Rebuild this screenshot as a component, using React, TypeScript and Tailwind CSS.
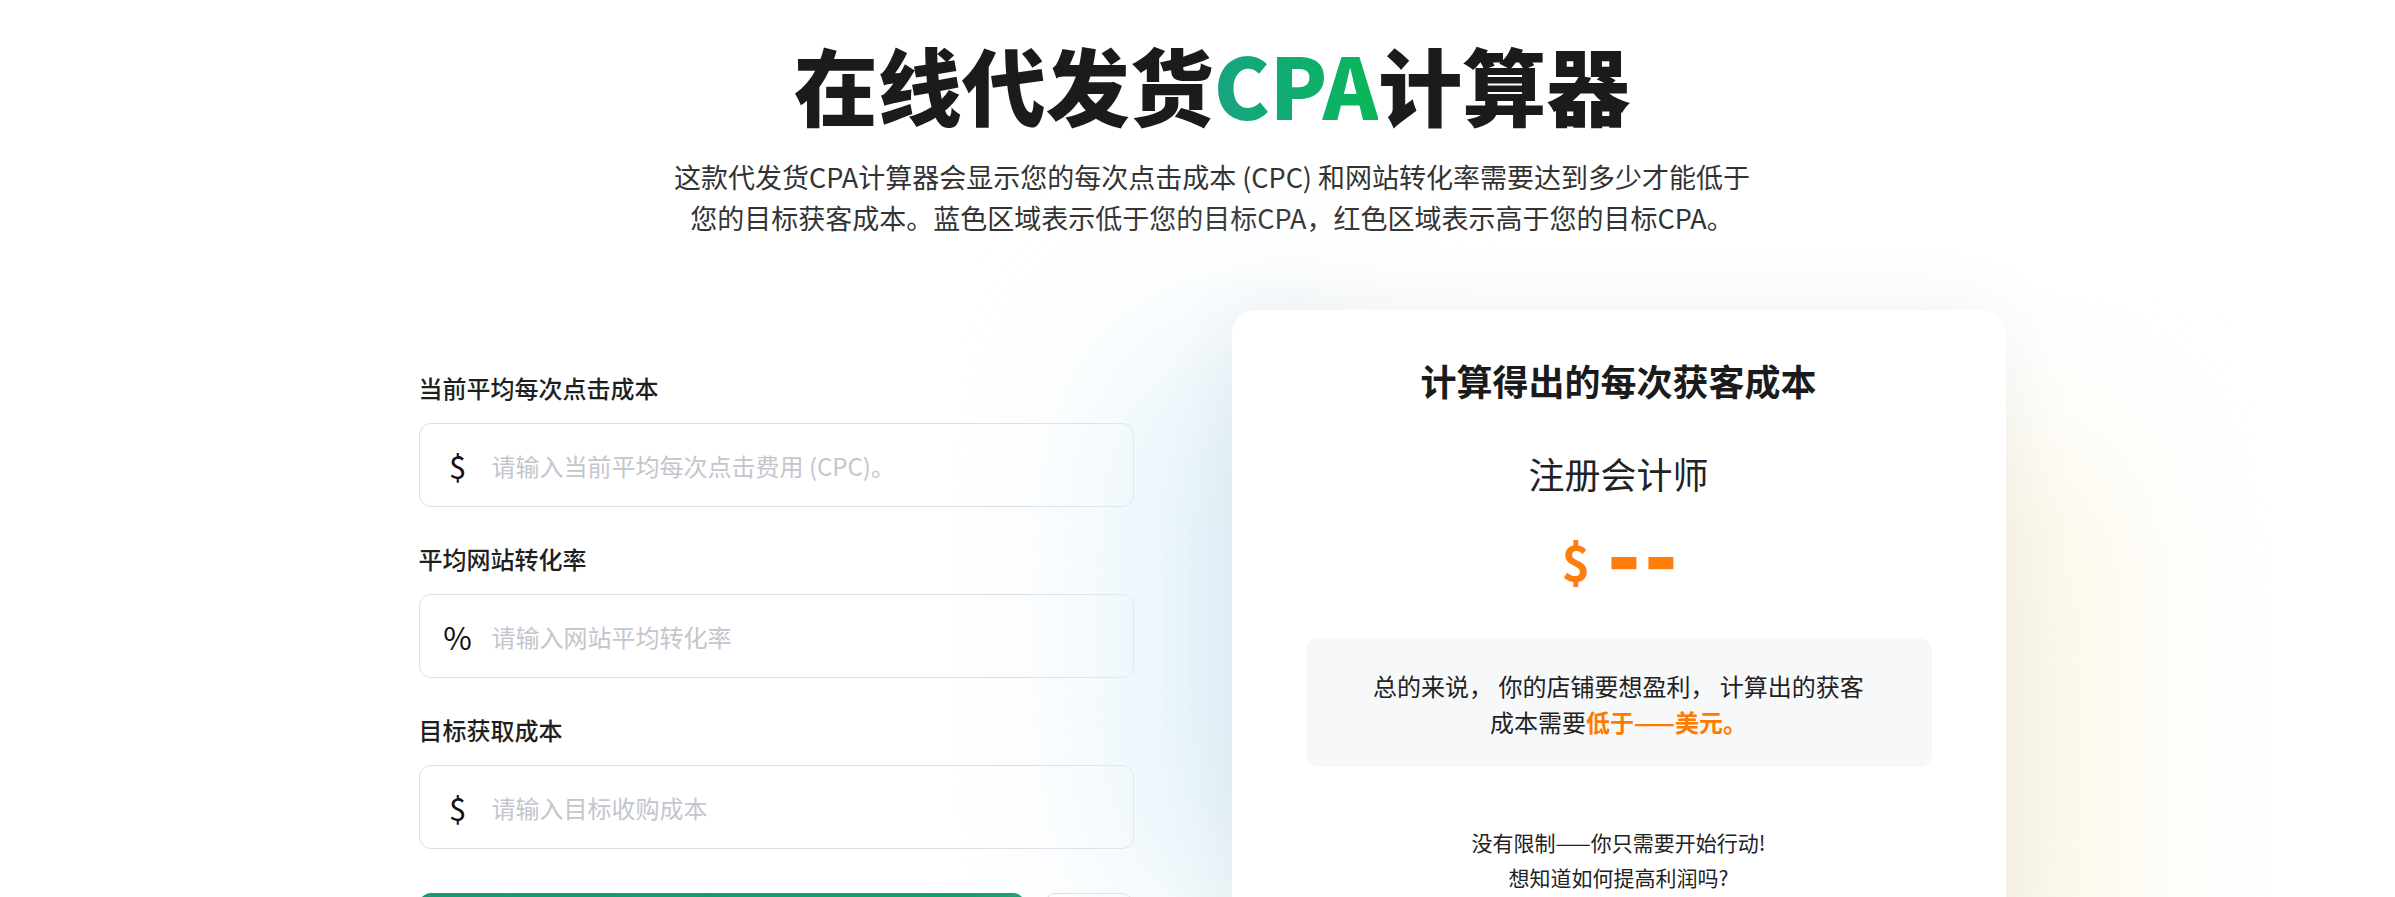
import { useState } from "react";

type Field = {
  key: string;
  label: string;
  unit: string;
  placeholder: string;
};

const fields: Field[] = [
  {
    key: "cpc",
    label: "当前平均每次点击成本",
    unit: "$",
    placeholder: "请输入当前平均每次点击费用 (CPC)。",
  },
  {
    key: "rate",
    label: "平均网站转化率",
    unit: "%",
    placeholder: "请输入网站平均转化率",
  },
  {
    key: "target",
    label: "目标获取成本",
    unit: "$",
    placeholder: "请输入目标收购成本",
  },
];

function InputField({
  field,
  value,
  onChange,
}: {
  field: Field;
  value: string;
  onChange: (v: string) => void;
}) {
  return (
    <label className="block">
      <span className="block text-[24px] leading-[36px] font-medium text-[#1f1f1f]">
        {field.label}
      </span>
      <div className="mt-[17px] flex h-[84px] items-center rounded-[12px] border border-[#dcdee3] bg-white/70">
        <span className="ml-[18px] w-[40px] text-center text-[31px] leading-none text-[#111]">
          {field.unit}
        </span>
        <input
          value={value}
          onChange={(e) => onChange(e.target.value)}
          placeholder={field.placeholder}
          className="ml-[14px] h-full flex-1 bg-transparent text-[24px] text-[#222] outline-none placeholder:text-[#c3c6cd]"
        />
      </div>
    </label>
  );
}

// empty result: "$ --" with chunky dashes
function EmptyAmount() {
  return (
    <p className="mt-[24px] flex items-center justify-center text-[48px] leading-[72px] font-bold text-[#ff7d0a]">
      <span>$</span>
      <span className="ml-[20px] inline-block w-[28px] -translate-y-[14px] scale-x-[1.9] scale-y-[2.4] text-center">
        -
      </span>
      <span className="ml-[9px] inline-block w-[28px] -translate-y-[14px] scale-x-[1.9] scale-y-[2.4] text-center">
        -
      </span>
    </p>
  );
}

export default function App() {
  const [values, setValues] = useState<Record<string, string>>({});

  return (
    <div className="min-h-screen overflow-hidden bg-white font-['Noto_Sans_CJK_SC','Noto_Sans',sans-serif] text-[#1f1f1f]">
      <div className="pl-[29px]">
        {/* Hero */}
        <header className="pt-[34px] text-center">
          <h1 className="text-[84px] leading-[100px] font-black text-[#1b1b1b]">
            在线代发货
            <span className="bg-gradient-to-r from-[#18a382] to-[#08b757] bg-clip-text text-transparent">
              CPA
            </span>
            计算器
          </h1>
          <p className="mt-[22px] text-[27px] leading-[41px] text-[#333]">
            这款代发货CPA计算器会显示您的每次点击成本 (CPC) 和网站转化率需要达到多少才能低于
            <br />
            您的目标获客成本。蓝色区域表示低于您的目标CPA，红色区域表示高于您的目标CPA。
          </p>
        </header>

        <main className="mx-auto mt-[72px] flex w-[1587px] justify-between">
          {/* Inputs */}
          <form
            className="w-[715px] pt-[60px]"
            onSubmit={(e) => e.preventDefault()}
          >
            <div className="flex flex-col gap-[34px]">
              {fields.map((f) => (
                <InputField
                  key={f.key}
                  field={f}
                  value={values[f.key] ?? ""}
                  onChange={(v) => setValues((s) => ({ ...s, [f.key]: v }))}
                />
              ))}
            </div>
            <div className="mt-[44px] flex gap-[19px]">
              <button
                type="submit"
                className="h-[72px] flex-1 rounded-[12px] bg-gradient-to-r from-[#149a7a] to-[#14a06f] text-[24px] font-bold text-white"
              >
                计算
              </button>
              <button
                type="button"
                onClick={() => setValues({})}
                className="h-[72px] w-[90px] rounded-[12px] border border-[#dcdee3] bg-white text-[24px] text-[#444]"
              >
                重置
              </button>
            </div>
          </form>

          {/* Result card */}
          <section className="relative w-[774px]">
            <div className="absolute -left-[120px] top-[20px] h-[600px] w-[260px] rounded-full bg-[#e4f2fa] blur-[80px]" />
            <div className="absolute -right-[110px] top-[120px] h-[640px] w-[220px] rounded-full bg-[#faf5e3] blur-[80px]" />
            <div className="relative rounded-[24px] bg-white px-[74px] pt-[43px] pb-[80px] text-center shadow-[0_0_80px_rgba(15,23,42,0.06)]">
              <h2 className="text-[36px] leading-[54px] font-bold text-[#1b1b1b]">
                计算得出的每次获客成本
              </h2>
              <p className="mt-[39px] text-[36px] leading-[54px] text-[#222]">
                注册会计师
              </p>
              <EmptyAmount />
              <div className="mt-[42px] rounded-[12px] bg-[#f7f8fa] pt-[30px] pb-[27px] text-[24px] leading-[36px] text-[#222]">
                总的来说， 你的店铺要想盈利， 计算出的获客
                <br />
                成本需要
                <span className="font-bold text-[#ff7a00]">低于——美元。</span>
              </div>
              <p className="mt-[58px] text-[21px] leading-[35px] text-[#222]">
                没有限制——你只需要开始行动!
                <br />
                想知道如何提高利润吗?
              </p>
              <button
                type="button"
                className="mt-[28px] h-[66px] w-[360px] rounded-[12px] bg-[#149a7a] text-[22px] font-bold text-white"
              >
                免费开始试用
              </button>
            </div>
          </section>
        </main>
      </div>
    </div>
  );
}
